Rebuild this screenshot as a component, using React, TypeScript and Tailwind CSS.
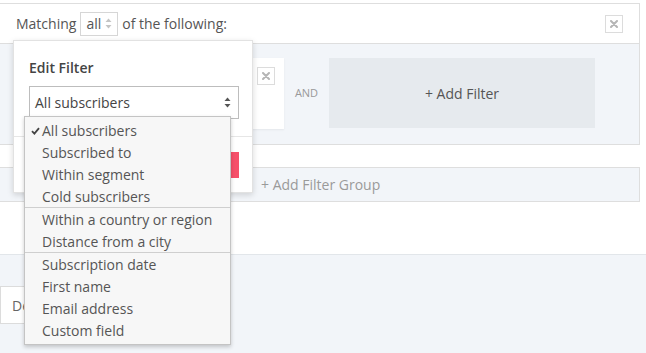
import { ChevronsUpDown } from "lucide-react";

const groups = [
  ["All subscribers", "Subscribed to", "Within segment", "Cold subscribers"],
  ["Within a country or region", "Distance from a city"],
  ["Subscription date", "First name", "Email address", "Custom field"],
];

function CloseBox() {
  return (
    <div className="flex h-[18px] w-[18px] items-center justify-center border border-[#dcdcdc] bg-white">
      <svg width="8" height="8" viewBox="0 0 8 8">
        <path d="M1 1L7 7M7 1L1 7" stroke="#b5b5b5" strokeWidth="2" strokeLinecap="round" />
      </svg>
    </div>
  );
}

function SortIcon({ color }: { color: string }) {
  return (
    <svg width="7" height="11" viewBox="0 0 7 11">
      <path d="M3.5 0.5L6.5 4H0.5Z" fill={color} />
      <path d="M3.5 10.5L6.5 7H0.5Z" fill={color} />
    </svg>
  );
}

export default function App() {
  return (
    <div className="relative h-[353px] w-[646px] overflow-hidden bg-white font-['Open_Sans',sans-serif] text-[14px] text-[#555]">
      <div className="pt-[3px]">
        <div className="w-[640px] border-y border-r border-[#dedede]">
          <div className="flex h-[39px] items-center justify-between pl-4 pr-[16px]">
            <div className="flex items-center gap-[4px]">
              <span>Matching</span>
              <span className="flex h-[24px] items-center gap-[4px] border border-[#d6d6d6] px-[5px]">
                all
                <SortIcon color="#c4c4c4" />
              </span>
              <span>of the following:</span>
            </div>
            <CloseBox />
          </div>
          <div className="flex h-[101px] items-start border-t border-[#dedede] bg-[#f2f5f9] pt-[14px]">
            <div className="ml-[14px] flex h-[71px] w-[270px] justify-end bg-white pr-[9px] pt-[9px] shadow-[0_1px_2px_rgba(0,0,0,0.06)]">
              <CloseBox />
            </div>
            <div className="flex h-[71px] w-[45px] items-center justify-center text-[11px] text-[#999]">AND</div>
            <div className="flex h-[70px] w-[266px] items-center justify-center bg-[#e6eaee] text-[14px] text-[#555]">
              + Add Filter
            </div>
          </div>
        </div>
        <div className="mt-[22px] flex h-[35px] w-[640px] items-center border-y border-r border-[#dedede] bg-[#f2f5f9] pl-[261px] text-[#9a9a9a]">
          + Add Filter Group
        </div>
        <div className="mt-[52px] h-[120px] border-t border-[#e2e6ea] bg-[#f2f5f9] pt-[31px]">
          <div className="flex h-[38px] w-[120px] items-center border border-[#dcdcdc] bg-white pl-[11px] text-[#666]">
            Delete
          </div>
        </div>
      </div>

      <div className="absolute left-[13px] top-[40px] flex h-[153px] w-[240px] flex-col border border-[#e2e2e2] bg-white shadow-[0_2px_6px_rgba(0,0,0,0.15)]">
        <div className="px-[15px] pt-[16px]">
          <div className="font-semibold text-[#444]">Edit Filter</div>
          <div className="mt-[8px] flex h-[33px] w-[210px] items-center justify-between border border-[#bdbdbd] pl-[5px] pr-[7px] text-[#444]">
            All subscribers
            <SortIcon color="#555" />
          </div>
        </div>
        <div className="mt-[17px] flex flex-1 items-start justify-end border-t border-[#e6e6e6] pr-[13px] pt-[15px]">
          <div className="h-[26px] w-[70px] bg-[#f6506a]" />
        </div>
      </div>

      <div className="absolute left-[24px] top-[116px] w-[207px] border border-[#c4c4c4] bg-[#f7f7f7] pb-[3px] pt-[2px] shadow-[0_2px_4px_rgba(0,0,0,0.2)]">
        {groups.map((items, gi) => (
          <div key={gi} className={gi > 0 ? "border-t border-[#cfcfcf]" : ""}>
            {items.map((item) => (
              <div key={item} className="relative flex h-[22px] items-center pl-[17px] text-[14px] text-[#555]">
                {item === "All subscribers" && (
                  <svg className="absolute left-[6px] top-[8px]" width="9" height="8" viewBox="0 0 9 8">
                    <path d="M1 4.2L3.4 6.6L8 1.2" stroke="#444" strokeWidth="1.8" fill="none" />
                  </svg>
                )}
                {item}
              </div>
            ))}
          </div>
        ))}
      </div>
    </div>
  );
}
